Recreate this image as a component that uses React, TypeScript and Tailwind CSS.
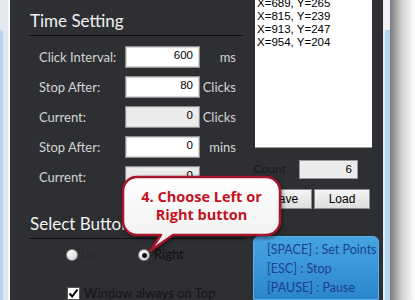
import React from "react";

const labelFont = { fontFamily: "Lato, 'Open Sans', sans-serif" };
const boxFont = { fontFamily: "'Liberation Sans', Arial, sans-serif" };

const Field = ({
  label,
  value,
  unit,
  gray,
}: {
  label: string;
  value: string;
  unit: string;
  gray?: boolean;
}) => (
  <div className="flex items-center h-[22px]">
    <div className="w-[96px] pl-[10px] pt-[2px] text-[13px] text-[#d4d4d4]" style={labelFont}>
      {label}
    </div>
    <div
      className={`w-[75px] h-[22px] border border-[#8e8e8e] shadow-[inset_0_0_0_1px_#d9d9d9] flex items-center justify-end pr-[6px] pb-[2px] text-[11.5px] text-black ${
        gray ? "bg-[#ececec]" : "bg-white"
      }`}
      style={boxFont}
    >
      {value}
    </div>
    <div className="w-[36px] pt-[2px] text-right text-[13px] text-[#d4d4d4]" style={labelFont}>
      {unit}
    </div>
  </div>
);

const Radio = ({ checked }: { checked?: boolean }) => (
  <div className="w-[12px] h-[12px] rounded-full border border-[#8a8a8a] bg-gradient-to-br from-[#ffffff] to-[#d6d6d6] flex items-center justify-center">
    {checked && <div className="w-[5px] h-[5px] rounded-full bg-[#111]" />}
  </div>
);

export default function App() {
  return (
    <div className="relative w-[415px] h-[300px] overflow-hidden flex bg-white">
      {/* left window frame */}
      <div className="w-[8px] flex flex-col">
        <div className="h-[30px] bg-[#e4e9ef]" />
        <div className="flex-1 flex">
          <div className="w-[3px] bg-[#bcd3ec]" />
          <div className="flex-1 bg-[#e0e6ed]" />
        </div>
      </div>
      <div className="w-[2px] bg-[#f7f9fb]" />

      {/* main dark area */}
      <div className="w-[373px] bg-[#2d2f33] flex">
        {/* left column */}
        <div className="w-[245px] pl-[19px] pr-[12px] flex flex-col">
          <div
            className="pt-[10px] pb-[3px] pl-[1px] border-b border-[#0e0e0e] text-[17px] leading-[22px] text-[#f2f2f2]"
            style={labelFont}
          >
            Time Setting
          </div>
          <div className="mt-[10px] flex flex-col gap-[8px]">
            <Field label="Click Interval:" value="600" unit="ms" />
            <Field label="Stop After:" value="80" unit="Clicks" />
            <Field label="Current:" value="0" unit="Clicks" gray />
            <Field label="Stop After:" value="0" unit="mins" />
            <Field label="Current:" value="0" unit="" gray />
          </div>
          <div
            className="mt-[25px] pb-[3px] pl-[1px] border-b border-[#0e0e0e] text-[17px] leading-[22px] text-[#f2f2f2]"
            style={labelFont}
          >
            Select Button
          </div>
          <div className="mt-[10px] pl-[37px] flex items-center h-[12px] text-[13px]" style={labelFont}>
            <div className="w-[72px] flex items-center gap-[3px]">
              <Radio />
              <span className="text-[#2a2a2a]">Left</span>
            </div>
            <div className="flex items-center gap-[4px]">
              <Radio checked />
              <span className="text-[#111]">Right</span>
            </div>
          </div>
          <div className="mt-[23px] pl-[38px] flex items-center gap-[4px] text-[13px]" style={labelFont}>
            <div className="w-[13px] h-[13px] border border-[#555] bg-white flex items-center justify-center">
              <svg width="11" height="11" viewBox="0 0 11 11">
                <path d="M1.5 5.5 L4.2 8.5 L9.5 1.5" fill="none" stroke="#000" strokeWidth="2" />
              </svg>
            </div>
            <span className="text-[#151515]">Window always on Top</span>
          </div>
        </div>

        {/* right column */}
        <div className="w-[128px] flex flex-col">
          <div className="w-[117px] h-[162px] bg-white overflow-hidden border-b border-[#9a9a9a]">
            <div className="-mt-[3px] pl-[2px] text-[11.5px] leading-[13px] text-black" style={boxFont}>
              <div>X=689, Y=265</div>
              <div>X=815, Y=239</div>
              <div>X=913, Y=247</div>
              <div>X=954, Y=204</div>
            </div>
          </div>
          <div className="mt-[12px] flex items-center h-[19px]">
            <div
              className="w-[37px] flex justify-end whitespace-nowrap text-[12px] text-[#1a1a1a]"
              style={labelFont}
            >
              Count :
            </div>
            <div
              className="ml-[7px] w-[59px] h-[19px] bg-[#ececec] border border-[#9a9a9a] flex items-center justify-end pr-[5px] text-[11.5px] text-black"
              style={boxFont}
            >
              6
            </div>
          </div>
          <div className="mt-[10px] ml-[2px] flex gap-[2px] h-[22px] text-[12px] text-black" style={boxFont}>
            <div className="w-[55px] border border-[#8c8c8c] bg-gradient-to-b from-[#f4f4f4] to-[#dedede] flex items-center justify-center">
              Save
            </div>
            <div className="w-[56px] border border-[#8c8c8c] bg-gradient-to-b from-[#f4f4f4] to-[#dedede] flex items-center justify-center">
              Load
            </div>
          </div>
          <div
            className="mt-[27px] -ml-[2px] w-[126px] h-[70px] rounded-t-[6px] bg-gradient-to-b from-[#47a5e3] to-[#2b86cc] border border-[#5cb0e6] pt-[3px] pl-[13px] text-[12.5px] leading-[19px] text-[#1d3f8e]"
            style={labelFont}
          >
            <div>[SPACE] : Set Points</div>
            <div>[ESC] : Stop</div>
            <div>[PAUSE] : Pause</div>
          </div>
        </div>
      </div>

      {/* right window frame + shadow */}
      <div className="w-[7px] flex flex-col">
        <div className="h-[30px] bg-[#eef2f6]" />
        <div className="flex-1 flex">
          <div className="w-[2px] bg-[#e6eef7]" />
          <div className="flex-1 bg-[#b7d3f0]" />
        </div>
      </div>
      <div className="flex-1 bg-gradient-to-r from-[#7c7c7c] via-[#d4d4d4] to-[#ffffff]" />

      {/* callout */}
      <div className="absolute left-[120px] top-[174px] w-[166px] h-[82px]">
        <svg
          width="166"
          height="82"
          viewBox="0 0 166 82"
          className="absolute left-0 top-0 drop-shadow-[1px_2px_2px_rgba(0,0,0,0.5)]"
        >
          <defs>
            <linearGradient id="cg" x1="0" y1="0" x2="0" y2="1">
              <stop offset="0" stopColor="#ffffff" />
              <stop offset="1" stopColor="#eeeeee" />
            </linearGradient>
          </defs>
          <path
            d="M17 3 H146 A14 14 0 0 1 160 17 V47 A14 14 0 0 1 146 61 H53 L30 77 L41 61 H17 A14 14 0 0 1 3 47 V17 A14 14 0 0 1 17 3 Z"
            fill="url(#cg)"
            stroke="#a4162a"
            strokeWidth="2.5"
            strokeLinejoin="round"
          />
        </svg>
        <div
          className="absolute left-[3px] top-[3px] w-[157px] h-[58px] flex flex-col items-center justify-center text-[14.5px] leading-[18px] font-bold text-[#c2131f]"
          style={{ fontFamily: "'Open Sans', Lato, sans-serif" }}
        >
          <div>4. Choose Left or</div>
          <div>Right button</div>
        </div>
      </div>
    </div>
  );
}
